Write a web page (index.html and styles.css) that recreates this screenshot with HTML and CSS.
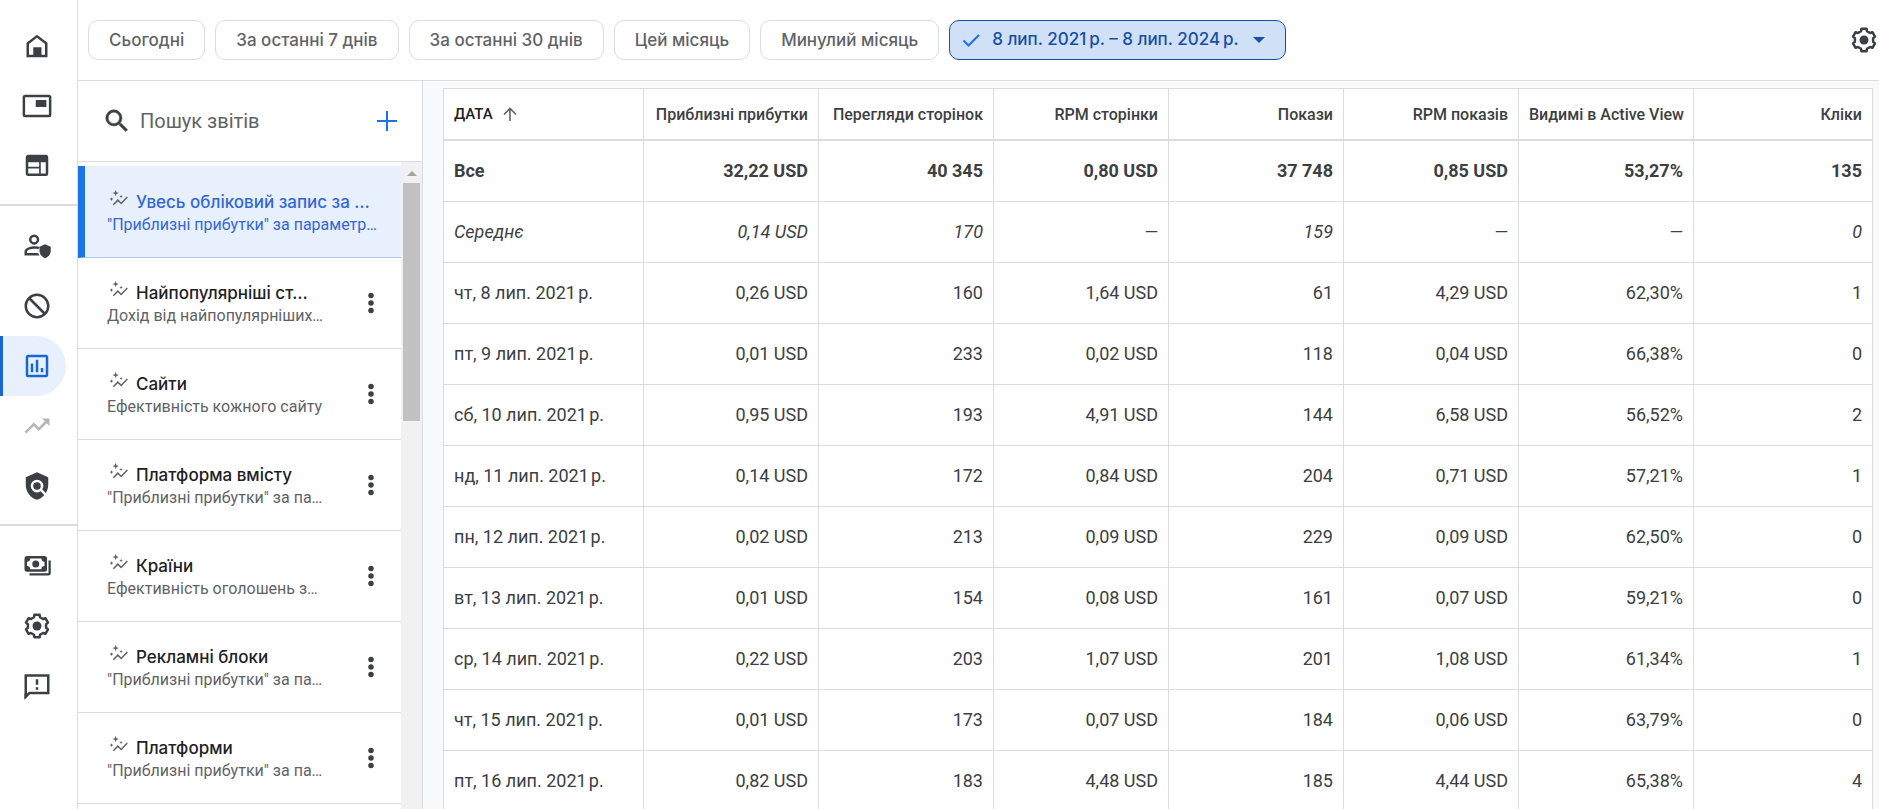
FILE: index.html
```html
<!DOCTYPE html>
<html lang="uk">
<head>
<meta charset="utf-8">
<title>Звіти</title>
<link rel="stylesheet" href="styles.css">
</head>
<body>
<svg class="defs" aria-hidden="true">
  <symbol id="spark" viewBox="0 0 24 24"><path d="M22 9.500 14.600 17.400 10.600 13.400 5.200 19" fill="none" stroke="currentColor" stroke-width="1.800"/><path d="M8 1l1 2.900 2.900 1-2.900 1L8 8.800 7 5.900 4.100 4.900 7 3.900zM14.500 7l.6 1.500 1.500.6-1.500.6-.6 1.500-.6-1.500-1.500-.6 1.500-.6zM3 9.800l.7 1.600 1.600.7-1.600.7L3 14.400l-.7-1.600-1.600-.7 1.600-.7z"/></symbol>
  <symbol id="dots" viewBox="0 0 24 24"><circle cx="12" cy="6" r="2.200"/><circle cx="12" cy="12" r="2.200"/><circle cx="12" cy="18" r="2.200"/></symbol>
  <symbol id="gear" viewBox="0 0 24 24"><path d="M9.590 5 9.930 3.040H14.070L14.410 5 16.850 6.420 18.730 5.730 20.800 9.310 19.260 10.590V13.410L20.800 14.690 18.730 18.270 16.850 17.580 14.410 19 14.070 20.960H9.930L9.590 19 7.150 17.580 5.270 18.270 3.200 14.690 4.740 13.410V10.590L3.200 9.310 5.270 5.730 7.150 6.420z" fill="none" stroke="currentColor" stroke-width="2" stroke-linejoin="round"/><circle cx="12" cy="12" r="3.600"/></symbol>
</svg>

<div class="app">
  <nav class="rail">
    <div class="rail-group">
      <a class="rail-item" href="#" aria-label="Головна"><svg class="icon" viewBox="0 0 24 24"><path fill-rule="evenodd" d="M12 3 3.600 9.300V21h16.800V9.300zM12 5.400l6.400 4.900V19h-2.800v-6H9v6H5.600v-8.700z"/></svg></a>
      <a class="rail-item" href="#" aria-label="Оголошення"><svg class="icon icon-wide" viewBox="0 0 24 24"><rect x="1.500" y="4" width="21" height="16" rx="1" fill="none" stroke="currentColor" stroke-width="2"/><path d="M11 7.200h8.500v5.600H11z"/></svg></a>
      <a class="rail-item" href="#" aria-label="Сайти"><svg class="icon" viewBox="0 0 24 24"><path fill-rule="evenodd" d="M5 3h14a2 2 0 0 1 2 2v13a2 2 0 0 1-2 2H5a2 2 0 0 1-2-2V5c0-1.100.9-2 2-2zM5 9v3.600h8.700V9zM5 14v4h8.700v-4zM15 9v9h4V9z"/></svg></a>
    </div>
    <div class="rail-group">
      <a class="rail-item" href="#" aria-label="Конфіденційність"><svg class="icon" viewBox="0 0 24 24"><circle cx="9.700" cy="6.800" r="3.100" fill="none" stroke="currentColor" stroke-width="2"/><path fill-rule="evenodd" d="M2 19.500v-3c0-3 5-4.300 8.500-4.300 1.300 0 2.500.1 3.700.5l-1.200 1.800c-4.500-.7-9 .5-9 2v1h8.800l1.200 2z"/><path d="M18.500 10.500l4.500 2v3c0 3-1.900 5.400-4.500 6.200-2.600-.8-4.500-3.200-4.500-6.200v-3z"/></svg></a>
      <a class="rail-item" href="#" aria-label="Блокування"><svg class="icon" viewBox="0 0 24 24"><circle cx="12" cy="12" r="9" fill="none" stroke="currentColor" stroke-width="2"/><path d="M5.600 5.600l12.800 12.800" stroke="currentColor" stroke-width="2"/></svg></a>
      <a class="rail-item rail-item-active" href="#" aria-label="Звіти"><svg class="icon" viewBox="0 0 24 24"><rect x="4" y="4" width="16" height="16" rx="1" fill="none" stroke="currentColor" stroke-width="2"/><path d="M7 10h2v7H7zM11 7h2v10h-2zM15 13.500h2V17h-2z"/></svg></a>
      <a class="rail-item rail-item-off" href="#" aria-label="Оптимізація"><svg class="icon" viewBox="0 0 24 24"><path d="M16 6l2.290 2.290-4.880 4.880-4-4L2 16.590 3.410 18l6-6 4 4 6.300-6.290L22 12V6z"/></svg></a>
      <a class="rail-item" href="#" aria-label="Центр правил"><svg class="icon" viewBox="0 0 24 24"><path d="M21 5l-9-4-9 4v6c0 5.550 3.840 10.740 9 12 2.300-.560 4.330-1.900 5.880-3.710l-3.120-3.120a4.994 4.994 0 0 1-6.290-.640 5.003 5.003 0 0 1 0-7.070 5.003 5.003 0 0 1 7.070 0 5.006 5.006 0 0 1 .640 6.290l2.900 2.900C20.290 15.690 21 13.380 21 11z"/><circle cx="12" cy="12" r="3"/></svg></a>
    </div>
    <div class="rail-group">
      <a class="rail-item" href="#" aria-label="Платежі"><svg class="icon" viewBox="0 0 24 24"><path fill-rule="evenodd" d="M4 4h14a2 2 0 0 1 2 2v8.500a2 2 0 0 1-2 2H4a2 2 0 0 1-2-2V6c0-1.100.9-2 2-2zM6.500 6A2.500 2.500 0 0 1 4 8.500V12a2.500 2.500 0 0 1 2.500 2.500h9A2.500 2.500 0 0 1 18 12V8.500A2.500 2.500 0 0 1 15.500 6z"/><circle cx="11" cy="10.300" r="2.800"/><path d="M21.200 7.500H23V17.500a2 2 0 0 1-2 2H6v-1.700h15.200z"/></svg></a>
      <a class="rail-item" href="#" aria-label="Обліковий запис"><svg class="icon"><use href="#gear"/></svg></a>
      <a class="rail-item" href="#" aria-label="Відгук"><svg class="icon" viewBox="0 0 24 24"><path d="M3 3.500h18v14H6l-3 3z" fill="none" stroke="currentColor" stroke-width="2"/><path d="M2 18v4.500l4-4zM11 6.500h2V11h-2zM11 13h2v2h-2z"/></svg></a>
    </div>
  </nav>

  <div class="page">
    <header class="toolbar">
      <button class="chip" type="button">Сьогодні</button>
      <button class="chip" type="button">За останні 7 днів</button>
      <button class="chip" type="button">За останні 30 днів</button>
      <button class="chip" type="button">Цей місяць</button>
      <button class="chip" type="button">Минулий місяць</button>
      <button class="chip chip-selected" type="button"><svg class="chip-check" viewBox="0 0 18 18"><path d="M1.500 9.500l5 5L17 4" fill="none" stroke="currentColor" stroke-width="2"/></svg><span>8 лип. 2021&#8239;р. – 8 лип. 2024&#8239;р.</span><svg class="chip-arrow" viewBox="0 0 12 6"><path d="M0 0h12L6 6z"/></svg></button>
      <button class="icon-button toolbar-gear" type="button" aria-label="Налаштування"><svg class="icon"><use href="#gear"/></svg></button>
    </header>

    <div class="content">
      <aside class="reports">
        <div class="search">
          <svg class="icon" viewBox="0 0 24 24"><path stroke="currentColor" stroke-width=".4" d="M15.500 14h-.790l-.280-.270A6.471 6.471 0 0 0 16 9.500 6.500 6.500 0 1 0 9.500 16c1.610 0 3.090-.590 4.230-1.570l.270.280v.790l5 4.990L20.490 19zm-6 0C7.010 14 5 11.990 5 9.500S7.010 5 9.500 5 14 7.010 14 9.500 11.990 14 9.500 14z"/></svg>
          <input class="search-input" type="text" placeholder="Пошук звітів" aria-label="Пошук звітів">
          <button class="icon-button add" type="button" aria-label="Створити звіт"><svg class="add-icon" viewBox="0 0 20 20"><path d="M10 0v20M0 10h20" stroke="currentColor" stroke-width="2"/></svg></button>
        </div>
        <div class="list-wrap">
          <ul class="list">
            <li class="report report-selected"><div class="report-text"><div class="report-title"><svg class="spark"><use href="#spark"/></svg><span>Увесь обліковий запис за …</span></div><div class="report-sub">"Приблизні прибутки" за параметр…</div></div></li>
            <li class="report"><div class="report-text"><div class="report-title"><svg class="spark"><use href="#spark"/></svg><span>Найпопулярніші ст…</span></div><div class="report-sub">Дохід від найпопулярніших…</div></div><button class="icon-button" type="button" aria-label="Меню"><svg class="icon"><use href="#dots"/></svg></button></li>
            <li class="report"><div class="report-text"><div class="report-title"><svg class="spark"><use href="#spark"/></svg><span>Сайти</span></div><div class="report-sub">Ефективність кожного сайту</div></div><button class="icon-button" type="button" aria-label="Меню"><svg class="icon"><use href="#dots"/></svg></button></li>
            <li class="report"><div class="report-text"><div class="report-title"><svg class="spark"><use href="#spark"/></svg><span>Платформа вмісту</span></div><div class="report-sub">"Приблизні прибутки" за па…</div></div><button class="icon-button" type="button" aria-label="Меню"><svg class="icon"><use href="#dots"/></svg></button></li>
            <li class="report"><div class="report-text"><div class="report-title"><svg class="spark"><use href="#spark"/></svg><span>Країни</span></div><div class="report-sub">Ефективність оголошень з…</div></div><button class="icon-button" type="button" aria-label="Меню"><svg class="icon"><use href="#dots"/></svg></button></li>
            <li class="report"><div class="report-text"><div class="report-title"><svg class="spark"><use href="#spark"/></svg><span>Рекламні блоки</span></div><div class="report-sub">"Приблизні прибутки" за па…</div></div><button class="icon-button" type="button" aria-label="Меню"><svg class="icon"><use href="#dots"/></svg></button></li>
            <li class="report"><div class="report-text"><div class="report-title"><svg class="spark"><use href="#spark"/></svg><span>Платформи</span></div><div class="report-sub">"Приблизні прибутки" за па…</div></div><button class="icon-button" type="button" aria-label="Меню"><svg class="icon"><use href="#dots"/></svg></button></li>
          </ul>
          <div class="scrollbar"><svg class="scroll-up" viewBox="0 0 10 5"><path d="M0 5h10L5 0z"/></svg><div class="scroll-thumb"></div></div>
        </div>
      </aside>

      <main class="main">
        <table class="data">
          <colgroup><col class="col-date"><col class="col-metric" span="6"><col></colgroup>
          <thead>
            <tr><th>ДАТА<svg class="sort" viewBox="0 0 14 14"><path d="M7 14V2M1 7.500l6-6 6 6" fill="none" stroke="currentColor" stroke-width="1.600"/></svg></th><th>Приблизні прибутки</th><th>Перегляди сторінок</th><th>RPM сторінки</th><th>Покази</th><th>RPM показів</th><th>Видимі в Active View</th><th>Кліки</th></tr>
          </thead>
          <tbody>
            <tr class="total"><td>Все</td><td>32,22 USD</td><td>40 345</td><td>0,80 USD</td><td>37 748</td><td>0,85 USD</td><td>53,27%</td><td>135</td></tr>
            <tr class="average"><td>Середнє</td><td>0,14 USD</td><td>170</td><td>—</td><td>159</td><td>—</td><td>—</td><td>0</td></tr>
            <tr><td>чт, 8 лип. 2021&#8239;р.</td><td>0,26 USD</td><td>160</td><td>1,64 USD</td><td>61</td><td>4,29 USD</td><td>62,30%</td><td>1</td></tr>
            <tr><td>пт, 9 лип. 2021&#8239;р.</td><td>0,01 USD</td><td>233</td><td>0,02 USD</td><td>118</td><td>0,04 USD</td><td>66,38%</td><td>0</td></tr>
            <tr><td>сб, 10 лип. 2021&#8239;р.</td><td>0,95 USD</td><td>193</td><td>4,91 USD</td><td>144</td><td>6,58 USD</td><td>56,52%</td><td>2</td></tr>
            <tr><td>нд, 11 лип. 2021&#8239;р.</td><td>0,14 USD</td><td>172</td><td>0,84 USD</td><td>204</td><td>0,71 USD</td><td>57,21%</td><td>1</td></tr>
            <tr><td>пн, 12 лип. 2021&#8239;р.</td><td>0,02 USD</td><td>213</td><td>0,09 USD</td><td>229</td><td>0,09 USD</td><td>62,50%</td><td>0</td></tr>
            <tr><td>вт, 13 лип. 2021&#8239;р.</td><td>0,01 USD</td><td>154</td><td>0,08 USD</td><td>161</td><td>0,07 USD</td><td>59,21%</td><td>0</td></tr>
            <tr><td>ср, 14 лип. 2021&#8239;р.</td><td>0,22 USD</td><td>203</td><td>1,07 USD</td><td>201</td><td>1,08 USD</td><td>61,34%</td><td>1</td></tr>
            <tr><td>чт, 15 лип. 2021&#8239;р.</td><td>0,01 USD</td><td>173</td><td>0,07 USD</td><td>184</td><td>0,06 USD</td><td>63,79%</td><td>0</td></tr>
            <tr><td>пт, 16 лип. 2021&#8239;р.</td><td>0,82 USD</td><td>183</td><td>4,48 USD</td><td>185</td><td>4,44 USD</td><td>65,38%</td><td>4</td></tr>
          </tbody>
        </table>
      </main>
    </div>
  </div>
</div>
</body>
</html>
```
FILE: styles.css
```css
* { box-sizing: border-box; }

body {
  margin: 0;
  height: 100vh;
  overflow: hidden;
  background: #fff;
  color: #3c4043;
  font-family: Roboto, "Noto Sans", sans-serif;
  font-size: 18px;
}

button, input { font: inherit; }
svg { fill: currentColor; flex: none; }
.defs { display: none; }
.icon { width: 30px; height: 30px; display: block; }

.app { display: flex; height: 100%; }

/* Navigation rail */
.rail { flex: none; width: 78px; padding-top: 16px; border-right: 1px solid #dadce0; }
.rail-group { padding-bottom: 8px; }
.rail-group + .rail-group { border-top: 2px solid #dadce0; padding-top: 10px; }
.rail-item { display: flex; align-items: center; height: 60px; margin-right: 11px; padding-left: 22px; color: #3c4043; }
.rail-item-active { padding-left: 19px; border-left: 3px solid #1967d2; border-radius: 0 30px 30px 0; background: #e8f0fe; color: #1967d2; }
.rail-item-off { color: #b4b6b8; }

.page { flex: 1; min-width: 0; display: flex; flex-direction: column; }

/* Date range toolbar */
.toolbar { flex: none; display: flex; align-items: center; gap: 10px; height: 81px; padding-left: 10px; border-bottom: 1px solid #dadce0; }
.chip { height: 40px; padding: 0 20px; border: 1px solid #dadce0; border-radius: 10px; background: #fff; color: #5f6368; font-family: Inter, sans-serif; font-size: 17px; font-weight: 500; white-space: nowrap; }
.chip-selected { display: flex; align-items: center; padding: 0 20px 0 12px; border-color: #174ea6; background: #d0e0f7; color: #174ea6; }
.chip-selected span { padding-bottom: 2px; }
.chip-check { width: 18px; height: 18px; margin-right: 12px; color: #1a73e8; }
.chip-arrow { width: 12px; height: 6px; margin-left: 14px; }
.icon-button { display: grid; place-items: center; flex: none; padding: 0; border: 0; background: none; color: #3c4043; }
.toolbar-gear { margin-left: auto; }

.content { flex: 1; min-height: 0; display: flex; }

/* Report list */
.reports { flex: none; width: 345px; display: flex; flex-direction: column; border-right: 1px solid #dadce0; }
.search { flex: none; display: flex; align-items: center; gap: 8px; height: 81px; padding: 0 25px 0 24px; border-bottom: 1px solid #dadce0; }
.search-input { flex: 1; min-width: 0; padding: 0; border: 0; outline: 0; background: none; font-size: 20px; color: #3c4043; }
.search-input::placeholder { color: #5f6368; opacity: 1; }
.add { color: #1a73e8; }
.add-icon { width: 20px; height: 20px; }

.list-wrap { flex: 1; min-height: 0; display: flex; overflow: hidden; }
.list { flex: 1; min-width: 0; margin: 0; padding: 4px 0 0; list-style: none; }
.report { display: flex; align-items: center; height: 91px; padding: 0 15px 0 29px; border-bottom: 1px solid #dadce0; }
.report-text { flex: 1; min-width: 0; white-space: nowrap; }
.report-selected { height: 92px; padding: 0 10px 0 22px; border-left: 7px solid #1a73e8; border-bottom-color: #aecbfa; background: #e8f0fe; }
.report-title { display: flex; gap: 7px; line-height: 26px; font-family: Inter, sans-serif; font-size: 17px; font-weight: 500; color: #202124; }
.report-sub { line-height: 20px; font-size: 16px; color: #5f6368; }
.report-selected .report-title, .report-selected .report-sub { color: #3367d6; }
.spark { width: 20px; height: 20px; margin-left: 2px; color: #5f6368; }

.scrollbar { flex: none; width: 21px; padding: 9px 2px 0; background: #f1f1f1; }
.scroll-up { display: block; width: 10px; height: 5px; margin: 0 auto 7px; color: #a3a3a3; }
.scroll-thumb { height: 238px; background: #c1c1c1; }

/* Report table */
.main { flex: 1; min-width: 0; padding: 7px 6px 0 20px; overflow: hidden; background: #f8f9fa; }
.data { width: 100%; table-layout: fixed; border-collapse: separate; border-spacing: 0; border-top: 1px solid #dadce0; border-left: 1px solid #dadce0; background: #fff; }
.col-date { width: 200px; }
.col-metric { width: 175px; }
.data th, .data td { height: 61px; padding: 0 10px 2px; border-right: 1px solid #dadce0; border-bottom: 1px solid #dadce0; text-align: right; white-space: nowrap; }
.data th:first-child, .data td:first-child { text-align: left; }
.data th { height: 52px; padding-bottom: 0; border-bottom-width: 2px; font-size: 16px; font-weight: 500; }
.data th:first-child { color: #202124; font-size: 15px; }
.sort { width: 14px; height: 14px; margin-left: 10px; vertical-align: -2px; color: #5f6368; }
.data .total { font-weight: 700; }
.average { font-style: italic; }
```
